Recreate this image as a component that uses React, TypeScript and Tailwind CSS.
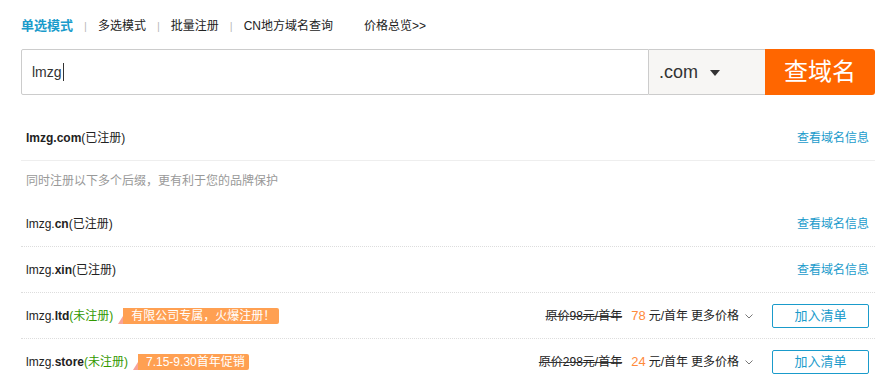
function Chevron() {
  return (
    <svg width="8" height="5" viewBox="0 0 8 5" className="ml-[6px]">
      <path d="M0.5 0.5 L4 4 L7.5 0.5" fill="none" stroke="#777" strokeWidth="1" />
    </svg>
  );
}

function Tag({ text }: { text: string }) {
  return (
    <span className="ml-[5px] inline-flex h-[16px] items-stretch">
      <svg width="5" height="16" viewBox="0 0 5 16">
        <polygon points="5,8 5,16 0,16" fill="#f7a39a" />
      </svg>
      <span className="flex items-center rounded-r-[2px] bg-[#ffa052] pl-[8px] pr-[4px] text-[12px] leading-none text-white">
        {text}
      </span>
    </span>
  );
}

function Price({ orig, now }: { orig: string; now: string }) {
  return (
    <div className="flex items-center text-[12px] text-[#222]">
      <span className="line-through decoration-[#333]">原价{orig}元/首年</span>
      <span className="ml-[9px] text-[13px] text-[#ff8a3a]">{now}</span>
      <span className="ml-[3px]">元/首年</span>
      <span className="ml-[3px]">更多价格</span>
      <Chevron />
      <button className="ml-[19px] h-[24px] w-[97px] rounded-[2px] border border-[#1a9bcb] text-[13px] text-[#1a9bcb]">
        加入清单
      </button>
    </div>
  );
}

export default function App() {
  const tabs = ["多选模式", "批量注册", "CN地方域名查询"];
  return (
    <div className="h-[380px] w-[882px] overflow-hidden bg-white font-['Liberation_Sans','Noto_Sans_CJK_SC',sans-serif] text-[#222]">
      <div className="w-[875px] pl-[21px]">
        <div className="flex h-[49px] items-center pt-[3px] text-[12px]">
          <span className="text-[13px] font-bold text-[#1a9bcb]">单选模式</span>
          {tabs.map((t) => (
            <span key={t} className="flex items-center">
              <span className="mx-[11px] text-[11px] text-[#bbb]">|</span>
              <span>{t}</span>
            </span>
          ))}
          <span className="ml-[31px]">价格总览&gt;&gt;</span>
        </div>

        <div className="flex h-[46px]">
          <div className="flex flex-1 items-center rounded-l-[2px] border border-[#ccc] pl-[10px] text-[14px] text-[#333]">
            lmzg
            <span className="ml-[1px] h-[18px] w-px bg-[#333]" />
          </div>
          <div className="flex w-[116px] items-center border-y border-[#ccc] bg-[#f7f6f4] pl-[10px] text-[18px] text-[#333]">
            .com
            <svg width="10" height="6" viewBox="0 0 10 6" className="ml-[12px] mt-[2px]">
              <polygon points="0,0 10,0 5,6" fill="#333" />
            </svg>
          </div>
          <button className="w-[110px] rounded-r-[3px] bg-[#ff6600] text-[24px] text-white">
            查域名
          </button>
        </div>

        <div className="mt-[20px] text-[12px]">
          <div className="flex h-[46px] items-center justify-between border-b border-[#eee] pl-[5px] pr-[6px] pt-[1px]">
            <span>
              <b>lmzg.com</b>(已注册)
            </span>
            <a className="text-[#1a9bcb]">查看域名信息</a>
          </div>
          <div className="flex h-[40px] items-center pl-[5px] text-[#999]">
            同时注册以下多个后缀，更有利于您的品牌保护
          </div>
          <div className="flex h-[46px] items-center justify-between border-b border-dotted border-[#ddd] pl-[5px] pr-[6px] pt-[1px]">
            <span>
              lmzg.<b>cn</b>(已注册)
            </span>
            <a className="text-[#1a9bcb]">查看域名信息</a>
          </div>
          <div className="flex h-[46px] items-center justify-between border-b border-dotted border-[#ddd] pl-[5px] pr-[6px] pt-[1px]">
            <span>
              lmzg.<b>xin</b>(已注册)
            </span>
            <a className="text-[#1a9bcb]">查看域名信息</a>
          </div>
          <div className="flex h-[46px] items-center justify-between border-b border-dotted border-[#ddd] pl-[5px] pr-[6px] pt-[1px]">
            <span className="flex items-center">
              lmzg.<b>ltd</b>
              <span className="text-[#339900]">(未注册)</span>
              <Tag text="有限公司专属，火爆注册！" />
            </span>
            <Price orig="98" now="78" />
          </div>
          <div className="flex h-[46px] items-center justify-between border-b border-dotted border-[#ddd] pl-[5px] pr-[6px] pt-[1px]">
            <span className="flex items-center">
              lmzg.<b>store</b>
              <span className="text-[#339900]">(未注册)</span>
              <Tag text="7.15-9.30首年促销" />
            </span>
            <Price orig="298" now="24" />
          </div>
        </div>
      </div>
    </div>
  );
}
